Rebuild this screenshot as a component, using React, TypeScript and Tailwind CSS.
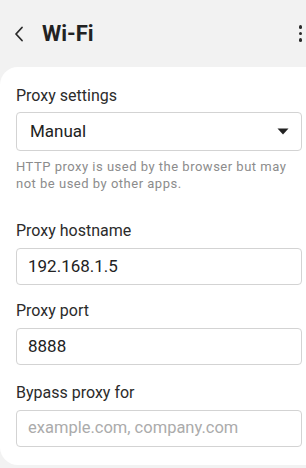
import React from "react";

const font = { fontFamily: "Roboto, 'Noto Sans', sans-serif" };

function Label({ children, className = "" }: { children: React.ReactNode; className?: string }) {
  return <div className={`text-[16px] leading-[22px] text-[#2b2b2b] ${className}`}>{children}</div>;
}

function Field({ value, placeholder, className = "" }: { value?: string; placeholder?: string; className?: string }) {
  return (
    <div className={`h-[37px] rounded-[4px] border border-[#d3d3d3] flex items-center pl-[11px] text-[17px] ${className}`}>
      {value ? <span className="text-[#222]">{value}</span> : <span className="text-[#ababab] text-[16.5px]">{placeholder}</span>}
    </div>
  );
}

export default function App() {
  return (
    <div className="w-[306px] h-[468px] bg-[#f2f2f2] overflow-hidden flex flex-col" style={font}>
      <div className="h-[67px] flex items-center shrink-0">
        <svg width="12" height="16" viewBox="0 0 12 16" className="ml-[13px]">
          <path d="M9 1.5 L3 8 L9 14.5" fill="none" stroke="#2a2a2a" strokeWidth="1.8" strokeLinecap="round" strokeLinejoin="round" />
        </svg>
        <div className="ml-[17px] text-[22px] font-bold text-[#222] leading-none">Wi-Fi</div>
        <div className="ml-auto mr-[4px] flex flex-col gap-[3px] items-center">
          <span className="w-[3.5px] h-[3.5px] rounded-full bg-[#2a2a2a]" />
          <span className="w-[3.5px] h-[3.5px] rounded-full bg-[#2a2a2a]" />
          <span className="w-[3.5px] h-[3.5px] rounded-full bg-[#2a2a2a]" />
        </div>
      </div>
      <div className="bg-white rounded-l-[18px] h-[398px] pl-[16px] pr-[4px] pt-[18px]">
        <Label>Proxy settings</Label>
        <div className="mt-[5px] h-[39px] rounded-[4px] border border-[#d3d3d3] flex items-center pl-[13px] pr-[12px] text-[17px] text-[#222]">
          <span>Manual</span>
          <svg width="12" height="7" viewBox="0 0 12 7" className="ml-auto">
            <path d="M0.5 0.5 L11.5 0.5 L6 6.5 Z" fill="#222" />
          </svg>
        </div>
        <div className="mt-[7px] text-[13px] tracking-[0.5px] leading-[17px] text-[#8c8c8c]">
          HTTP proxy is used by the browser but may not be used by other apps.
        </div>
        <Label className="mt-[28px]">Proxy hostname</Label>
        <Field className="mt-[6px]" value="192.168.1.5" />
        <Label className="mt-[15px]">Proxy port</Label>
        <Field className="mt-[6px]" value="8888" />
        <Label className="mt-[17px]">Bypass proxy for</Label>
        <Field className="mt-[6px]" placeholder="example.com, company.com" />
      </div>
    </div>
  );
}
